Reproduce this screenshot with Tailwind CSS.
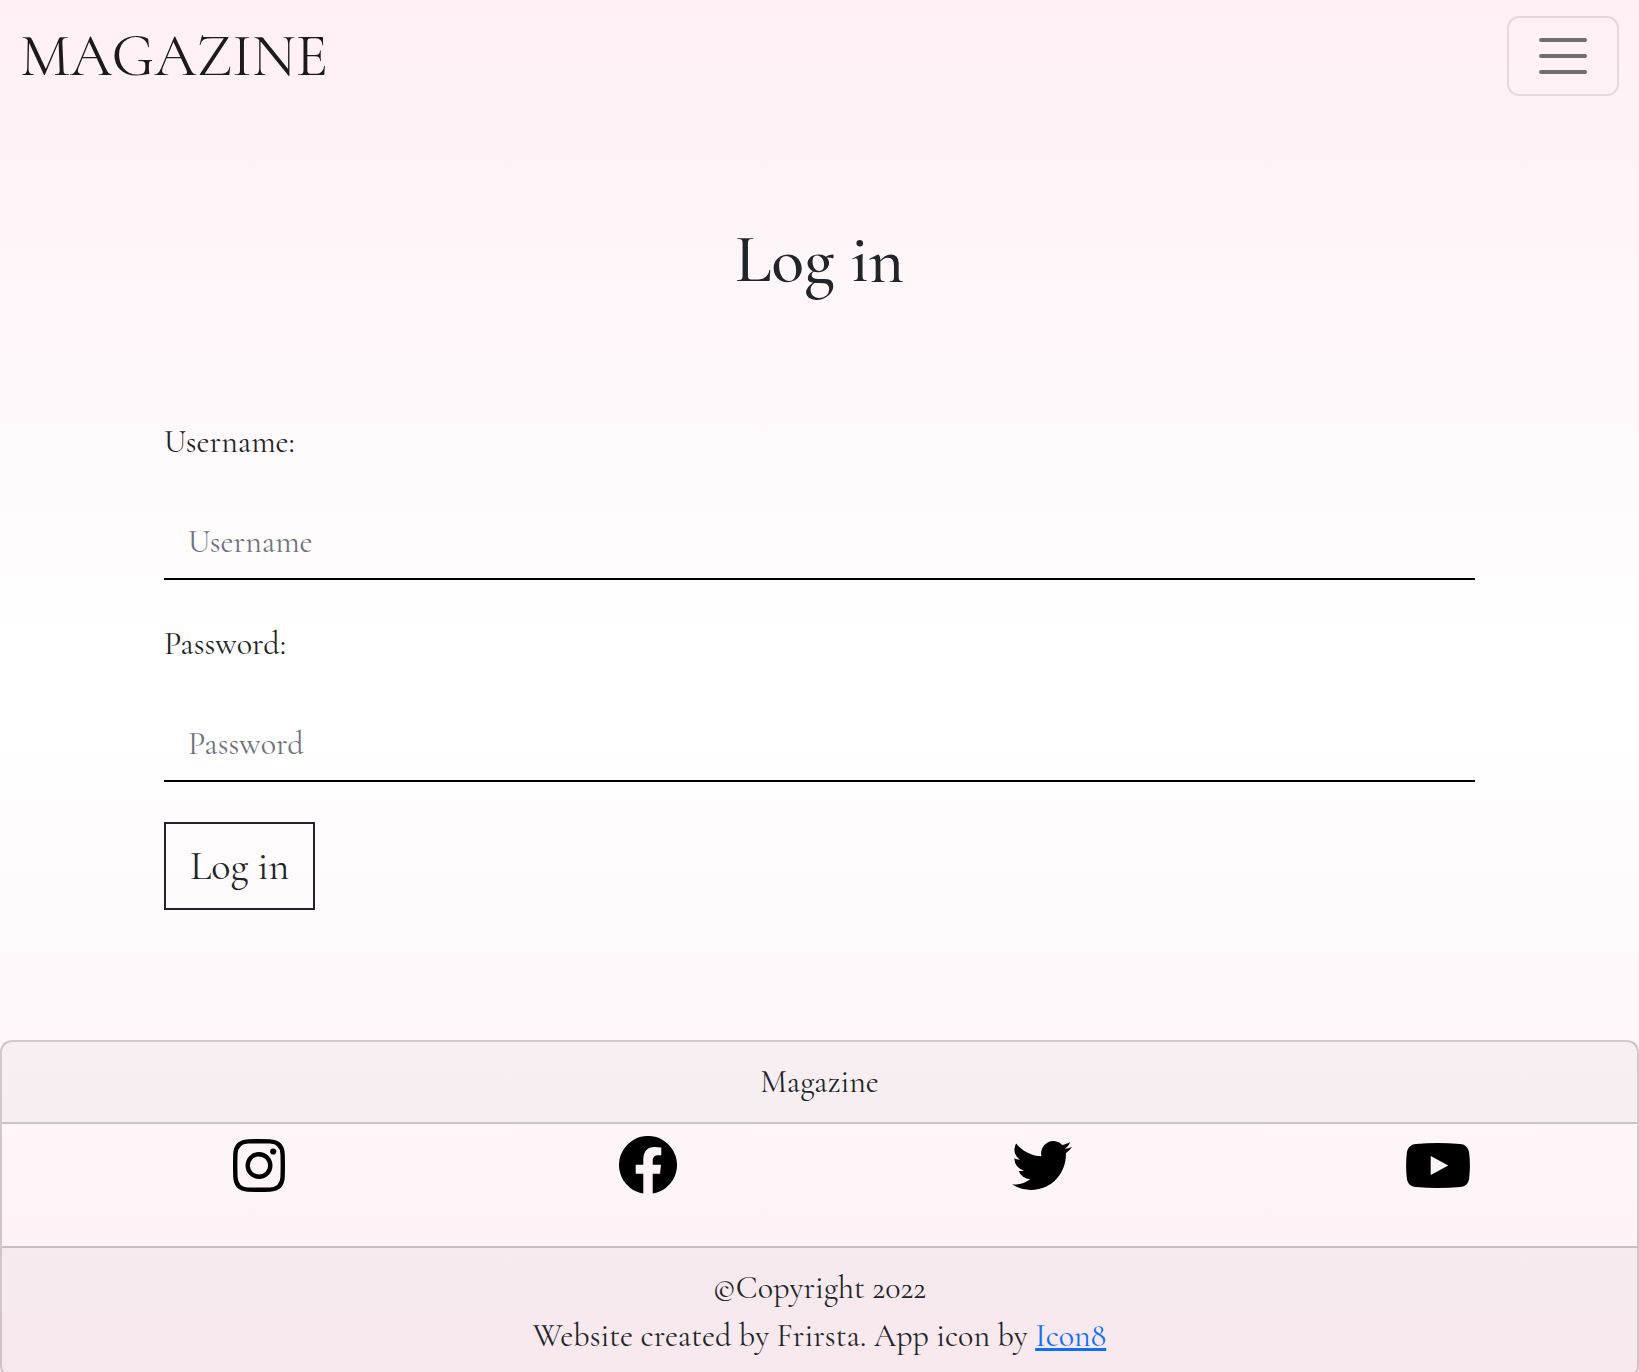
<!DOCTYPE html>
<html lang="en">
<head>
<meta charset="utf-8">
<meta name="viewport" content="width=device-width, initial-scale=1">
<title>Magazine - Log in</title>
<script src="https://cdn.jsdelivr.net/npm/@tailwindcss/browser@4"></script>
</head>
<body class="min-h-screen bg-linear-to-b from-[#fff0f5] via-white to-[#fff0f5] font-['Cormorant_Garamond','Liberation_Serif',serif] text-[32px] leading-[48px] text-[#212529]">
  <header>
    <nav class="flex items-center justify-between px-5 py-4">
      <a href="#" class="text-[60px] leading-[72px] text-[#1c1b1c]">MAGAZINE</a>
      <button type="button" aria-label="Toggle navigation" class="flex h-20 w-28 items-center justify-center rounded-xl border-2 border-black/10">
        <svg class="size-15" viewBox="0 0 30 30" fill="none" stroke="#000" stroke-opacity=".55" stroke-width="2" stroke-linecap="round" stroke-miterlimit="10"><path d="M4 7h22M4 15h22M4 23h22"/></svg>
      </button>
    </nav>
  </header>

  <main class="mx-auto w-4/5 pt-[108px]">
    <h1 class="text-center text-[68px] leading-[80px] font-medium">Log in</h1>
    <form class="mt-[118px] flex flex-col items-start gap-10">
      <div class="flex w-full flex-col gap-[38px]">
        <label for="username" class="self-start">Username:</label>
        <input id="username" type="text" placeholder="Username" class="h-[76px] w-full border-b-2 border-black bg-transparent px-6 outline-none placeholder:text-[#6c757d]">
      </div>
      <div class="flex w-full flex-col gap-[38px]">
        <label for="password" class="self-start">Password:</label>
        <input id="password" type="password" placeholder="Password" class="h-[76px] w-full border-b-2 border-black bg-transparent px-6 outline-none placeholder:text-[#6c757d]">
      </div>
      <button type="submit" class="border-2 border-[#212529] px-6 py-[18px] text-[40px] leading-[48px]">Log in</button>
    </form>
  </main>

  <footer class="mt-[130px] rounded-xl border-2 border-black/18 text-center">
    <div class="border-b-2 border-black/18 bg-black/3 py-4">Magazine</div>
    <div class="flex items-center justify-around pt-3 pb-[52px] pl-16 text-black">
      <a href="#" aria-label="Instagram">
        <svg class="block h-[53px] w-[52px]" viewBox="0 0 52 53" fill="none" stroke="currentColor" stroke-width="4.4"><path d="M15 2.4Q26 2 37 2.4C45 2.8 49.2 7 49.6 15Q50 26.500 49.600 38C49.200 46 45 50.200 37 50.600Q26 51 15 50.600C7 50.200 2.800 46 2.400 38Q2 26.500 2.400 15C2.800 7 7 2.800 15 2.400Z"/><circle cx="26" cy="26.500" r="11.300"/><circle cx="40.200" cy="12.500" r="3.100" fill="currentColor" stroke="none"/></svg>
      </a>
      <a href="#" aria-label="Facebook">
        <svg class="block size-[58px]" viewBox="0 0 58 58" fill="currentColor"><path d="M24.300 57.600A29 29 0 1 1 33.700 57.600V37.700H41L42 28.700H33.700V25C33.700 21 36 19.300 39.500 19.300H42.300V11.500Q39 11 35.500 11C28.500 11 24.300 15.500 24.300 23.500V28.700H16.700V37.700H24.300Z"/></svg>
      </a>
      <a href="#" aria-label="Twitter">
        <svg class="block h-[49px] w-[60px]" viewBox="0 2.25 24 19.5" fill="currentColor"><path d="M23.953 4.57a10 10 0 01-2.825.775 4.958 4.958 0 002.163-2.723c-.951.555-2.005.959-3.127 1.184a4.92 4.92 0 00-8.384 4.482C7.69 8.095 4.067 6.13 1.64 3.162a4.822 4.822 0 00-.666 2.475c0 1.71.87 3.213 2.188 4.096a4.904 4.904 0 01-2.228-.616v.06a4.923 4.923 0 003.946 4.827 4.996 4.996 0 01-2.212.085 4.936 4.936 0 004.604 3.417 9.867 9.867 0 01-6.102 2.105c-.39 0-.779-.023-1.17-.067a13.995 13.995 0 007.557 2.209c9.053 0 13.998-7.496 13.998-13.985 0-.21 0-.42-.015-.63A9.935 9.935 0 0024 4.59z"/></svg>
      </a>
      <a href="#" aria-label="YouTube">
        <svg class="block h-[45px] w-16" viewBox="0 0 64 45" fill="currentColor" fill-rule="evenodd"><path d="M10 .9Q32-.9 54 .9C59.500 1.400 62.500 4.500 63.200 10Q64.600 22.500 63.200 35C62.500 40.500 59.500 43.600 54 44.100Q32 45.900 10 44.100C4.500 43.600 1.500 40.500.8 35Q-.6 22.500.8 10C1.500 4.500 4.500 1.400 10 .9ZM24.700 13V32L42.300 22.500Z"/></svg>
      </a>
    </div>
    <div class="border-t-2 border-black/18 bg-black/3 py-4">
      <p>©Copyright 2022</p>
      <p>Website created by Frirsta. App icon by <a href="#" class="text-[#0d6efd] underline">Icon8</a></p>
    </div>
  </footer>
</body>
</html>
